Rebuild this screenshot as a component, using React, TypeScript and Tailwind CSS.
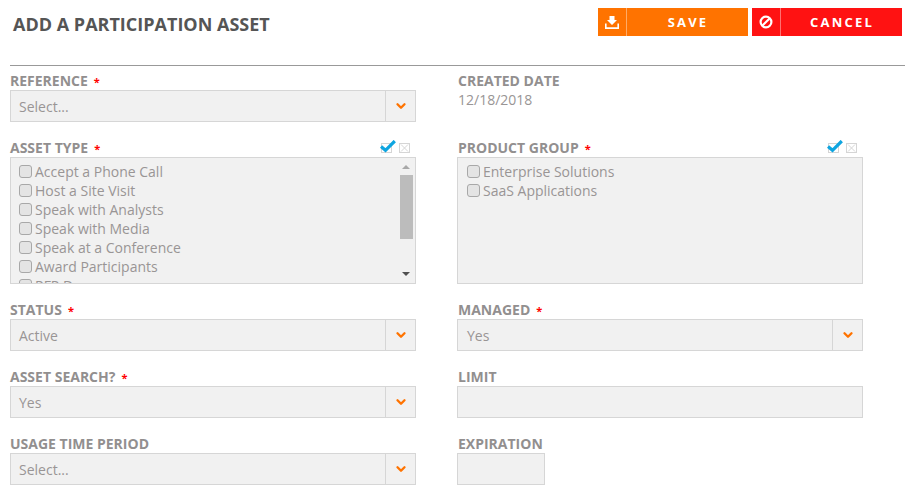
import React from 'react';
import { ChevronDown } from 'lucide-react';

const assetTypes = [
  'Accept a Phone Call',
  'Host a Site Visit',
  'Speak with Analysts',
  'Speak with Media',
  'Speak at a Conference',
  'Award Participants',
  'RFP Demo',
];

const productGroups = ['Enterprise Solutions', 'SaaS Applications'];

// right column text sits 1px further in than the left one
const FieldLabel: React.FC<{ text: string; required?: boolean; right?: boolean }> = ({ text, required, right }) => (
  <span className={`block h-[17px] text-[14px] leading-[15px] font-bold text-[#928f8f] ${right ? 'pl-[1px]' : ''}`}>
    {text}
    {required && <span className="ml-[6px] text-[11px] font-bold text-[#ff0000]">*</span>}
  </span>
);

const SelectBox: React.FC<{ value: string; right?: boolean }> = ({ value, right }) => (
  <div className="flex h-8 w-[406px] border border-[#d6d6d6] bg-[#f1f1f1]">
    <span className={`flex-1 text-[14px] leading-[31px] text-[#999595] ${right ? 'px-[9px]' : 'px-[8px]'}`}>{value}</span>
    <span className="flex w-[30px] items-center justify-center border-l border-[#d6d6d6]">
      <ChevronDown size={14} strokeWidth={4} className="text-[#ff7300]" />
    </span>
  </div>
);

const ToggleIcons = () => (
  <span className="flex items-start gap-[3px]">
    <svg width="16" height="13" viewBox="0 0 16 13">
      <rect x="1.500" y="3.500" width="10" height="9" fill="none" stroke="#d5d5d5" />
      <path d="M1 6.500l4.500 3.800L14.800 1" fill="none" stroke="#0ea5e0" strokeWidth="3.200" />
    </svg>
    <svg className="mt-[3px]" width="11" height="10" viewBox="0 0 11 10">
      <rect x="0.500" y="0.500" width="10" height="9" fill="none" stroke="#d5d5d5" />
      <path d="M2 1.500l7 7M9 1.500l-7 7" fill="none" stroke="#d5d5d5" />
    </svg>
  </span>
);

const CheckList: React.FC<{ items: string[]; scroll?: boolean; right?: boolean }> = ({ items, scroll, right }) => (
  <div className={`relative h-[127px] w-[406px] overflow-hidden border border-[#d6d6d6] bg-[#f1f1f1] pt-[4px] ${right ? 'pl-[9px]' : 'pl-[8px]'}`}>
    {items.map((item) => (
      <div key={item} className="flex h-[19px] items-center text-[14px] text-[#999595]">
        <span className="mr-[3px] h-[13px] w-[13px] rounded-[3px] border border-[#a8a8a8] bg-[#e4e4e4]" />
        {item}
      </div>
    ))}
    {scroll && (
      <div className="absolute top-0 right-[1px] flex h-full w-[16px] flex-col items-center bg-[#f1f1f1]">
        <span className="mt-[7px] h-0 w-0 border-x-[4px] border-b-[4px] border-x-transparent border-b-[#a8a8a8]" />
        <span className="mt-[6px] h-[64px] w-[13px] bg-[#bcbcbc]" />
        <span className="mt-[33px] h-0 w-0 border-x-[4px] border-t-[4px] border-x-transparent border-t-[#505050]" />
      </div>
    )}
  </div>
);

const ActionButton: React.FC<{ label: string; color: string; icon: React.ReactNode }> = ({ label, color, icon }) => (
  <button className={`flex h-[28px] w-[150px] items-center text-white ${color}`}>
    <span className="flex h-full w-[29px] items-center justify-center border-r border-white/40">{icon}</span>
    <span className="flex-1 pt-[1px] pl-[1px] text-center text-[13px] font-bold tracking-[2.2px]">{label}</span>
  </button>
);

const App: React.FC = () => {
  return (
    <div className="h-[494px] w-[912px] overflow-hidden bg-white font-['Open_Sans',sans-serif]">
      <div className="mr-[7px] ml-[10px] flex h-[66px] items-start justify-between border-b border-[#999999]">
        <h1 className="mt-[12px] ml-[3px] text-[18px] leading-[24px] font-bold text-[#555555]">
          ADD A PARTICIPATION ASSET
        </h1>
        <div className="mt-[8px] mr-[3px] flex gap-[4px]">
          <ActionButton
            label="SAVE"
            color="bg-[#ff7300]"
            icon={
              <svg width="14" height="13" viewBox="0 0 14 13" fill="white">
                <path d="M4.500 0h5v4H12L7 9 2 4h2.500z" />
                <path d="M0 7.500h1.600v3.700h10.800V7.500H14V13H0z" />
              </svg>
            }
          />
          <ActionButton
            label="CANCEL"
            color="bg-[#ff1212]"
            icon={
              <svg width="14" height="14" viewBox="0 0 14 14" fill="none" stroke="white" strokeWidth="2.200">
                <circle cx="7" cy="7" r="5.400" />
                <path d="M3.200 10.800l7.600-7.600" />
              </svg>
            }
          />
        </div>
      </div>

      <div className="mt-[7px] ml-[10px] grid grid-cols-[406px_406px] gap-x-[41px] gap-y-[18px]">
        <div>
          <FieldLabel text="REFERENCE" required />
          <SelectBox value="Select..." />
        </div>
        <div>
          <FieldLabel text="CREATED DATE" right />
          <span className="block pl-[1px] text-[14px] leading-[19px] text-[#999595]">12/18/2018</span>
        </div>

        <div>
          <div className="flex justify-between pr-[6px]">
            <FieldLabel text="ASSET TYPE" required />
            <ToggleIcons />
          </div>
          <CheckList items={assetTypes} scroll />
        </div>
        <div>
          <div className="flex justify-between pr-[6px]">
            <FieldLabel text="PRODUCT GROUP" required right />
            <ToggleIcons />
          </div>
          <CheckList items={productGroups} right />
        </div>

        <div>
          <FieldLabel text="STATUS" required />
          <SelectBox value="Active" />
        </div>
        <div>
          <FieldLabel text="MANAGED" required right />
          <SelectBox value="Yes" right />
        </div>

        <div>
          <FieldLabel text="ASSET SEARCH?" required />
          <SelectBox value="Yes" />
        </div>
        <div>
          <FieldLabel text="LIMIT" right />
          <div className="h-8 w-[406px] border border-[#d6d6d6] bg-[#f1f1f1]" />
        </div>

        <div>
          <FieldLabel text="USAGE TIME PERIOD" />
          <SelectBox value="Select..." />
        </div>
        <div>
          <FieldLabel text="EXPIRATION" right />
          <div className="h-8 w-[88px] border border-[#d6d6d6] bg-[#f1f1f1]" />
        </div>
      </div>
    </div>
  );
};

export default App;
